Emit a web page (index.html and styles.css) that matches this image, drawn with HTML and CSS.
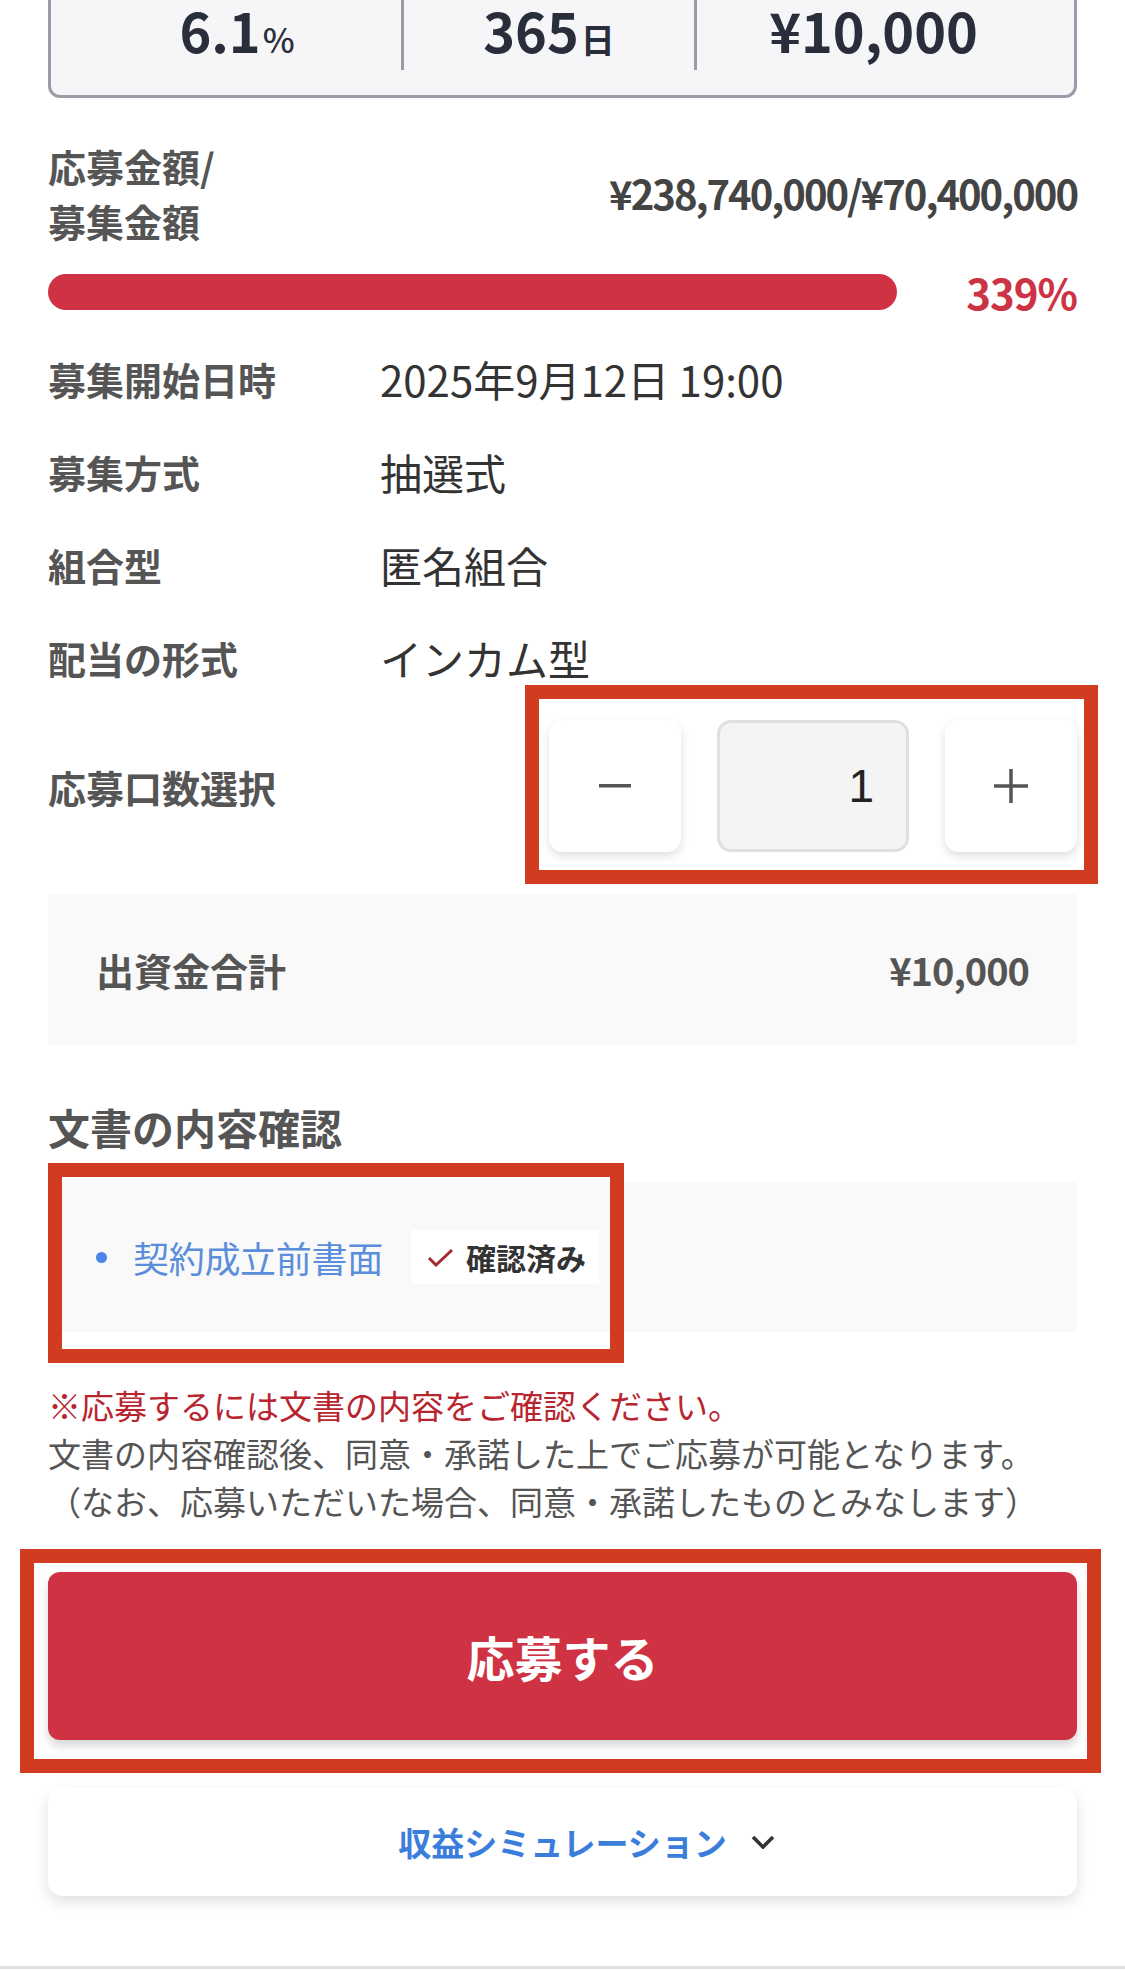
FILE: index.html
```html
<!DOCTYPE html>
<html lang="ja">
<head>
<meta charset="utf-8">
<title>応募</title>
<link rel="stylesheet" href="styles.css">
</head>
<body>
<main class="page">
  <section class="stats">
    <div class="stat stat-first"><span class="num">6.1</span><span class="unit unit-pct">%</span></div>
    <div class="stat"><span class="num">365</span><span class="unit">日</span></div>
    <div class="stat stat-last"><span class="num">¥10,000</span></div>
  </section>

  <div class="amount-row">
    <div class="label">応募金額/<br>募集金額</div>
    <div class="amount-value">¥238,740,000/¥70,400,000</div>
  </div>

  <div class="progress-row">
    <div class="bar"><div class="bar-fill" style="width:100%"></div></div>
    <div class="pct">339%</div>
  </div>

  <dl class="info">
    <div class="info-row"><dt class="label">募集開始日時</dt><dd class="info-value">2025年9月12日 19:00</dd></div>
    <div class="info-row"><dt class="label">募集方式</dt><dd class="info-value">抽選式</dd></div>
    <div class="info-row"><dt class="label">組合型</dt><dd class="info-value">匿名組合</dd></div>
    <div class="info-row"><dt class="label">配当の形式</dt><dd class="info-value">インカム型</dd></div>
  </dl>

  <div class="qty-row">
    <div class="label">応募口数選択</div>
    <div class="stepper hl hl-stepper">
      <button class="step-btn" type="button" aria-label="減らす">
        <svg width="32" height="4" viewBox="0 0 32 4"><rect x="0" y="0" width="32" height="3.5" fill="#555"/></svg>
      </button>
      <div class="qty-input">1</div>
      <button class="step-btn" type="button" aria-label="増やす">
        <svg width="34" height="34" viewBox="0 0 34 34"><rect x="0" y="15.25" width="34" height="3.5" fill="#555"/><rect x="15.25" y="0" width="3.5" height="34" fill="#555"/></svg>
      </button>
    </div>
  </div>

  <div class="total">
    <div class="label">出資金合計</div>
    <div class="total-value">¥10,000</div>
  </div>

  <h2 class="doc-heading">文書の内容確認</h2>
  <div class="doc-box hl hl-doc">
    <span class="bullet"></span>
    <a class="doc-link">契約成立前書面</a>
    <span class="badge">
      <svg width="27" height="19" viewBox="0 0 27 19"><path d="M2 10 L9 17 L25 2" fill="none" stroke="#a32a35" stroke-width="3"/></svg>
      <span>確認済み</span>
    </span>
  </div>

  <div class="notes">
    <p class="note-red">※応募するには文書の内容をご確認ください。</p>
    <p class="note">文書の内容確認後、同意・承諾した上でご応募が可能となります。</p>
    <p class="note">（なお、応募いただいた場合、同意・承諾したものとみなします）</p>
  </div>

  <div class="apply-wrap hl hl-apply">
    <button class="apply" type="button">応募する</button>
  </div>

  <div class="sim">
    <span class="sim-text">収益シミュレーション</span>
    <svg class="chev" width="24" height="14" viewBox="0 0 24 14"><path d="M2 2 L12 12 L22 2" fill="none" stroke="#333" stroke-width="3.6"/></svg>
  </div>
</main>
<div class="footer-line"></div>
</body>
</html>
```

FILE: styles.css
```css
*, *::before, *::after { box-sizing: border-box; }
html, body { margin: 0; padding: 0; background: #fff; }
body {
  font-family: "Noto Sans CJK JP", "Noto Sans", sans-serif;
  color: #333;
  width: 1125px;
  height: 1971px;
  overflow: hidden;
}
.page { padding: 0 48px; }

/* stats card */
.stats {
  display: grid;
  grid-template-columns: 350fr 293fr 380fr;
  background: #f6f6f9;
  border: 3px solid #9c9ca8;
  border-top: none;
  border-radius: 0 0 12px 12px;
  padding-bottom: 25px;
}
.stat {
  height: 70px;
  padding-bottom: 10px;
  line-height: 60px;
  text-align: center;
  color: #2a2e3b;
  white-space: nowrap;
}
.stat + .stat { border-left: 3px solid #9c9ca8; }
.stat-first { padding-left: 22px; }
.stat-last { padding-right: 24px; }
.num { font-size: 54px; font-weight: 700; }
.unit { font-size: 34px; font-weight: 700; margin-left: 2px; }
.unit-pct { font-weight: 500; }

.label {
  font-size: 38px;
  font-weight: 700;
  color: #555;
  line-height: 55px;
  white-space: nowrap;
}

/* amount */
.amount-row {
  margin-top: 40px;
  display: flex;
  justify-content: space-between;
  align-items: center;
}
.amount-value {
  font-size: 40px;
  font-weight: 700;
  color: #444;
  letter-spacing: -2px;
}

/* progress */
.progress-row {
  margin-top: 26px;
  display: flex;
  align-items: center;
  height: 36px;
}
.bar { flex: 1; height: 36px; }
.bar-fill { height: 36px; border-radius: 18px; background: #cf3242; }
.pct {
  width: 180px;
  text-align: right;
  font-size: 42px;
  font-weight: 700;
  color: #cc3344;
  line-height: 1;
  letter-spacing: -1px;
}

/* info list */
.info { margin: 22px 0 0; }
.info-row {
  display: grid;
  grid-template-columns: 332px 1fr;
  align-items: center;
  padding: 19px 0;
}
.info-row dt, .info-row dd { margin: 0; }
.info-value {
  font-size: 42px;
  color: #333;
  line-height: 55px;
}

/* quantity */
.qty-row {
  margin-top: 16px;
  display: flex;
  justify-content: space-between;
  align-items: center;
}
.stepper {
  position: relative;
  display: flex;
  gap: 36px;
}
.step-btn {
  width: 132px;
  height: 132px;
  border: none;
  border-radius: 14px;
  background: #fff;
  box-shadow: 0 4px 10px rgba(0,0,0,0.13);
  display: flex;
  align-items: center;
  justify-content: center;
  padding: 0;
}
.qty-input {
  width: 192px;
  height: 132px;
  background: #f4f4f5;
  border: 3px solid #e0e0e2;
  border-radius: 14px;
  display: flex;
  align-items: center;
  justify-content: flex-end;
  padding-right: 32px;
  font-family: "Liberation Sans", sans-serif;
  font-size: 46px;
  color: #222;
}

/* total */
.total {
  margin-top: 42px;
  background: #f9f9f9;
  padding: 48px 48px;
  display: flex;
  justify-content: space-between;
  align-items: center;
}
.total-value {
  font-size: 38px;
  font-weight: 700;
  color: #555;
  letter-spacing: -1px;
  line-height: 55px;
}

/* documents */
.doc-heading {
  margin: 52px 0 0;
  font-size: 42px;
  line-height: 60px;
  font-weight: 700;
  color: #555;
}
.doc-box {
  position: relative;
  margin-top: 25px;
  background: #f9f9f9;
  height: 150px;
  padding: 0 48px;
  display: flex;
  align-items: center;
}
.bullet {
  width: 11px;
  height: 11px;
  border-radius: 50%;
  background: #4a86e8;
  margin-right: 26px;
  flex: none;
}
.doc-link {
  font-size: 36px;
  color: #5a8edc;
  line-height: 52px;
  letter-spacing: -0.3px;
}
.badge {
  margin-left: 28px;
  height: 54px;
  background: #fff;
  padding: 0 13px 0 16px;
  display: flex;
  align-items: center;
  gap: 12px;
  font-size: 30px;
  font-weight: 700;
  color: #333;
}

/* notes */
.notes { margin-top: 49px; }
.notes p {
  margin: 0;
  font-size: 33px;
  line-height: 48px;
  white-space: nowrap;
}
.note-red { color: #b8252f; }
.note { color: #555; }

/* apply */
.apply-wrap {
  position: relative;
  margin-top: 47px;
}
.apply {
  display: block;
  width: 100%;
  height: 168px;
  border: none;
  border-radius: 12px;
  background: #cf3242;
  color: #fff;
  font-family: inherit;
  font-size: 48px;
  font-weight: 700;
  box-shadow: 0 6px 10px rgba(0,0,0,0.16);
}

/* simulation */
.sim {
  margin-top: 48px;
  height: 108px;
  background: #fff;
  border-radius: 14px;
  box-shadow: 0 6px 14px rgba(0,0,0,0.12);
  display: flex;
  align-items: center;
  justify-content: center;
  padding-left: 48px;
}
.sim-text {
  font-size: 33px;
  font-weight: 700;
  color: #3b7ddb;
}
.chev { margin-left: 24px; }

.footer-line {
  margin-top: 70px;
  border-top: 3px solid #e0e0e0;
}

/* annotation highlight boxes (overlays) */
.hl::after {
  content: "";
  position: absolute;
  border: 14px solid #d13b1f;
  pointer-events: none;
}
.hl-stepper::after { left: -24px; right: -21px; top: -35px; bottom: -32px; }
.hl-doc::after { left: 0; top: -19px; width: 576px; height: 200px; }
.hl-apply::after { left: -28px; right: -24px; top: -23px; bottom: -33px; }
```
